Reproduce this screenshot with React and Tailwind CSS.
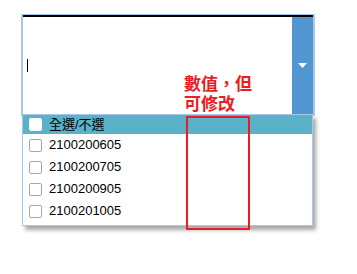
import React from 'react';

const items = ['2100200605', '2100200705', '2100200905', '2100201005'];

const CheckBox = ({ white }) => (
  <span
    className={`block w-[13px] h-[13px] rounded-[2px] border ${
      white ? 'bg-white border-white' : 'bg-white border-[#a3a7ad]'
    }`}
  />
);

const App = () => {
  return (
    <div
      className="relative w-[357px] h-[274px] bg-white overflow-hidden pt-[14px] pl-[21px]"
      style={{ fontFamily: '"Liberation Sans", "Noto Sans CJK TC", sans-serif' }}
    >
      {/* Combobox */}
      <div className="w-[294px] h-[102px] border-t border-x-2 border-b-2 border-[#a7c8ec] flex flex-col">
        <div className="h-[2px] bg-black" />
        <div className="flex flex-1">
          <div className="flex-1 flex items-center pl-[4px]">
            <span className="block w-px h-[13px] bg-black" />
          </div>
          <div className="w-[21px] bg-[#5097d1] flex items-center justify-center">
            <svg width="9" height="5" viewBox="0 0 9 5">
              <polygon points="0,0 9,0 4.5,5" fill="#fff" />
            </svg>
          </div>
        </div>
      </div>

      {/* Dropdown list */}
      <div className="absolute left-[22px] top-[114px] w-[291px] h-[112px] bg-white border border-[#a7c8ec] shadow-[3px_4px_4px_rgba(0,0,0,0.35)]">
        <div className="h-[19px] bg-[#5ab2c8] flex items-center pl-[6px] gap-[7px] text-[13px] text-black">
          <CheckBox white />
          <span>全選/不選</span>
        </div>
        {items.map((item) => (
          <div key={item} className="h-[22px] flex items-center pl-[6px] gap-[7px] text-[13px] text-black">
            <CheckBox />
            <span>{item}</span>
          </div>
        ))}
      </div>

      {/* Annotation */}
      <div className="absolute left-[184px] top-[75px] text-[17px] leading-[20px] font-bold text-[#ec1c24]">
        <div>數值，但</div>
        <div>可修改</div>
      </div>
      <div className="absolute left-[186px] top-[116px] w-[64px] h-[114px] border-2 border-[#ec1c24]" />
    </div>
  );
};

export default App;
